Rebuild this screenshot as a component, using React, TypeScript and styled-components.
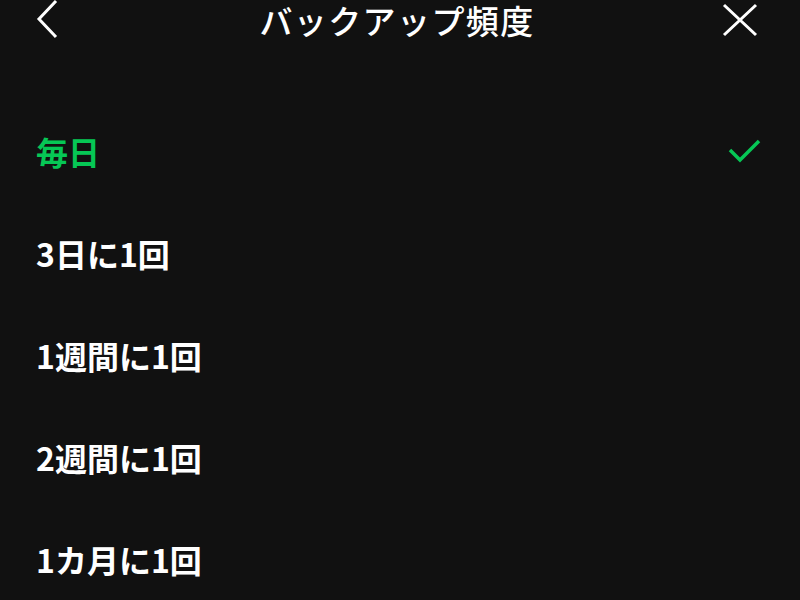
import { createGlobalStyle, styled } from "styled-components";

const GlobalStyle = createGlobalStyle`
  html, body {
    margin: 0;
    background: #111111;
  }
  body {
    font-family: "Noto Sans CJK JP", "Noto Sans", sans-serif;
    color: #ffffff;
  }
`;

const Screen = styled.div`
  width: 800px;
  height: 600px;
  overflow: hidden;
  background: #111111;
`;

const Header = styled.header`
  display: grid;
  grid-template-columns: 80px 1fr 80px;
  align-items: center;
  height: 38px;
  padding: 0 42px 0 36px;
  box-sizing: border-box;
`;

const Title = styled.h1`
  margin: 0;
  text-align: center;
  font-size: 33px;
  font-weight: 500;
  line-height: 38px;
  letter-spacing: 1.4px;
  white-space: nowrap;
`;

const IconButton = styled.button<{ $end?: boolean }>`
  display: flex;
  justify-content: ${(p) => (p.$end ? "flex-end" : "flex-start")};
  align-items: center;
  padding: 0;
  border: 0;
  background: none;
  color: #ffffff;
`;

const List = styled.ul`
  list-style: none;
  margin: 62px 0 0;
  padding: 0;
`;

const Row = styled.li<{ $active?: boolean }>`
  display: flex;
  align-items: center;
  justify-content: space-between;
  height: 102px;
  padding: 0 38px 0 36px;
  font-size: 32px;
  font-weight: 700;
  color: ${(p) => (p.$active ? "#06c755" : "#ffffff")};
`;

const options = ["毎日", "3日に1回", "1週間に1回", "2週間に1回", "1カ月に1回"];

export default function App() {
  return (
    <Screen>
      <GlobalStyle />
      <Header>
        <IconButton aria-label="戻る">
          <svg width="24" height="40" viewBox="0 0 24 40">
            <path d="M20 1 L3 19 L20 37" fill="none" stroke="#fff" strokeWidth="3" strokeLinejoin="miter" />
          </svg>
        </IconButton>
        <Title>バックアップ頻度</Title>
        <IconButton $end aria-label="閉じる">
          <svg width="36" height="36" viewBox="0 0 36 36">
            <path d="M2 3 L34 33 M34 3 L2 33" fill="none" stroke="#fff" strokeWidth="3" />
          </svg>
        </IconButton>
      </Header>
      <List>
        {options.map((o, i) => (
          <Row key={o} $active={i === 0}>
            <span>{o}</span>
            {i === 0 && (
              <svg width="34" height="26" viewBox="0 0 34 26">
                <path d="M2 12 L12 22 L31 3" fill="none" stroke="#06c755" strokeWidth="3.5" />
              </svg>
            )}
          </Row>
        ))}
      </List>
    </Screen>
  );
}
